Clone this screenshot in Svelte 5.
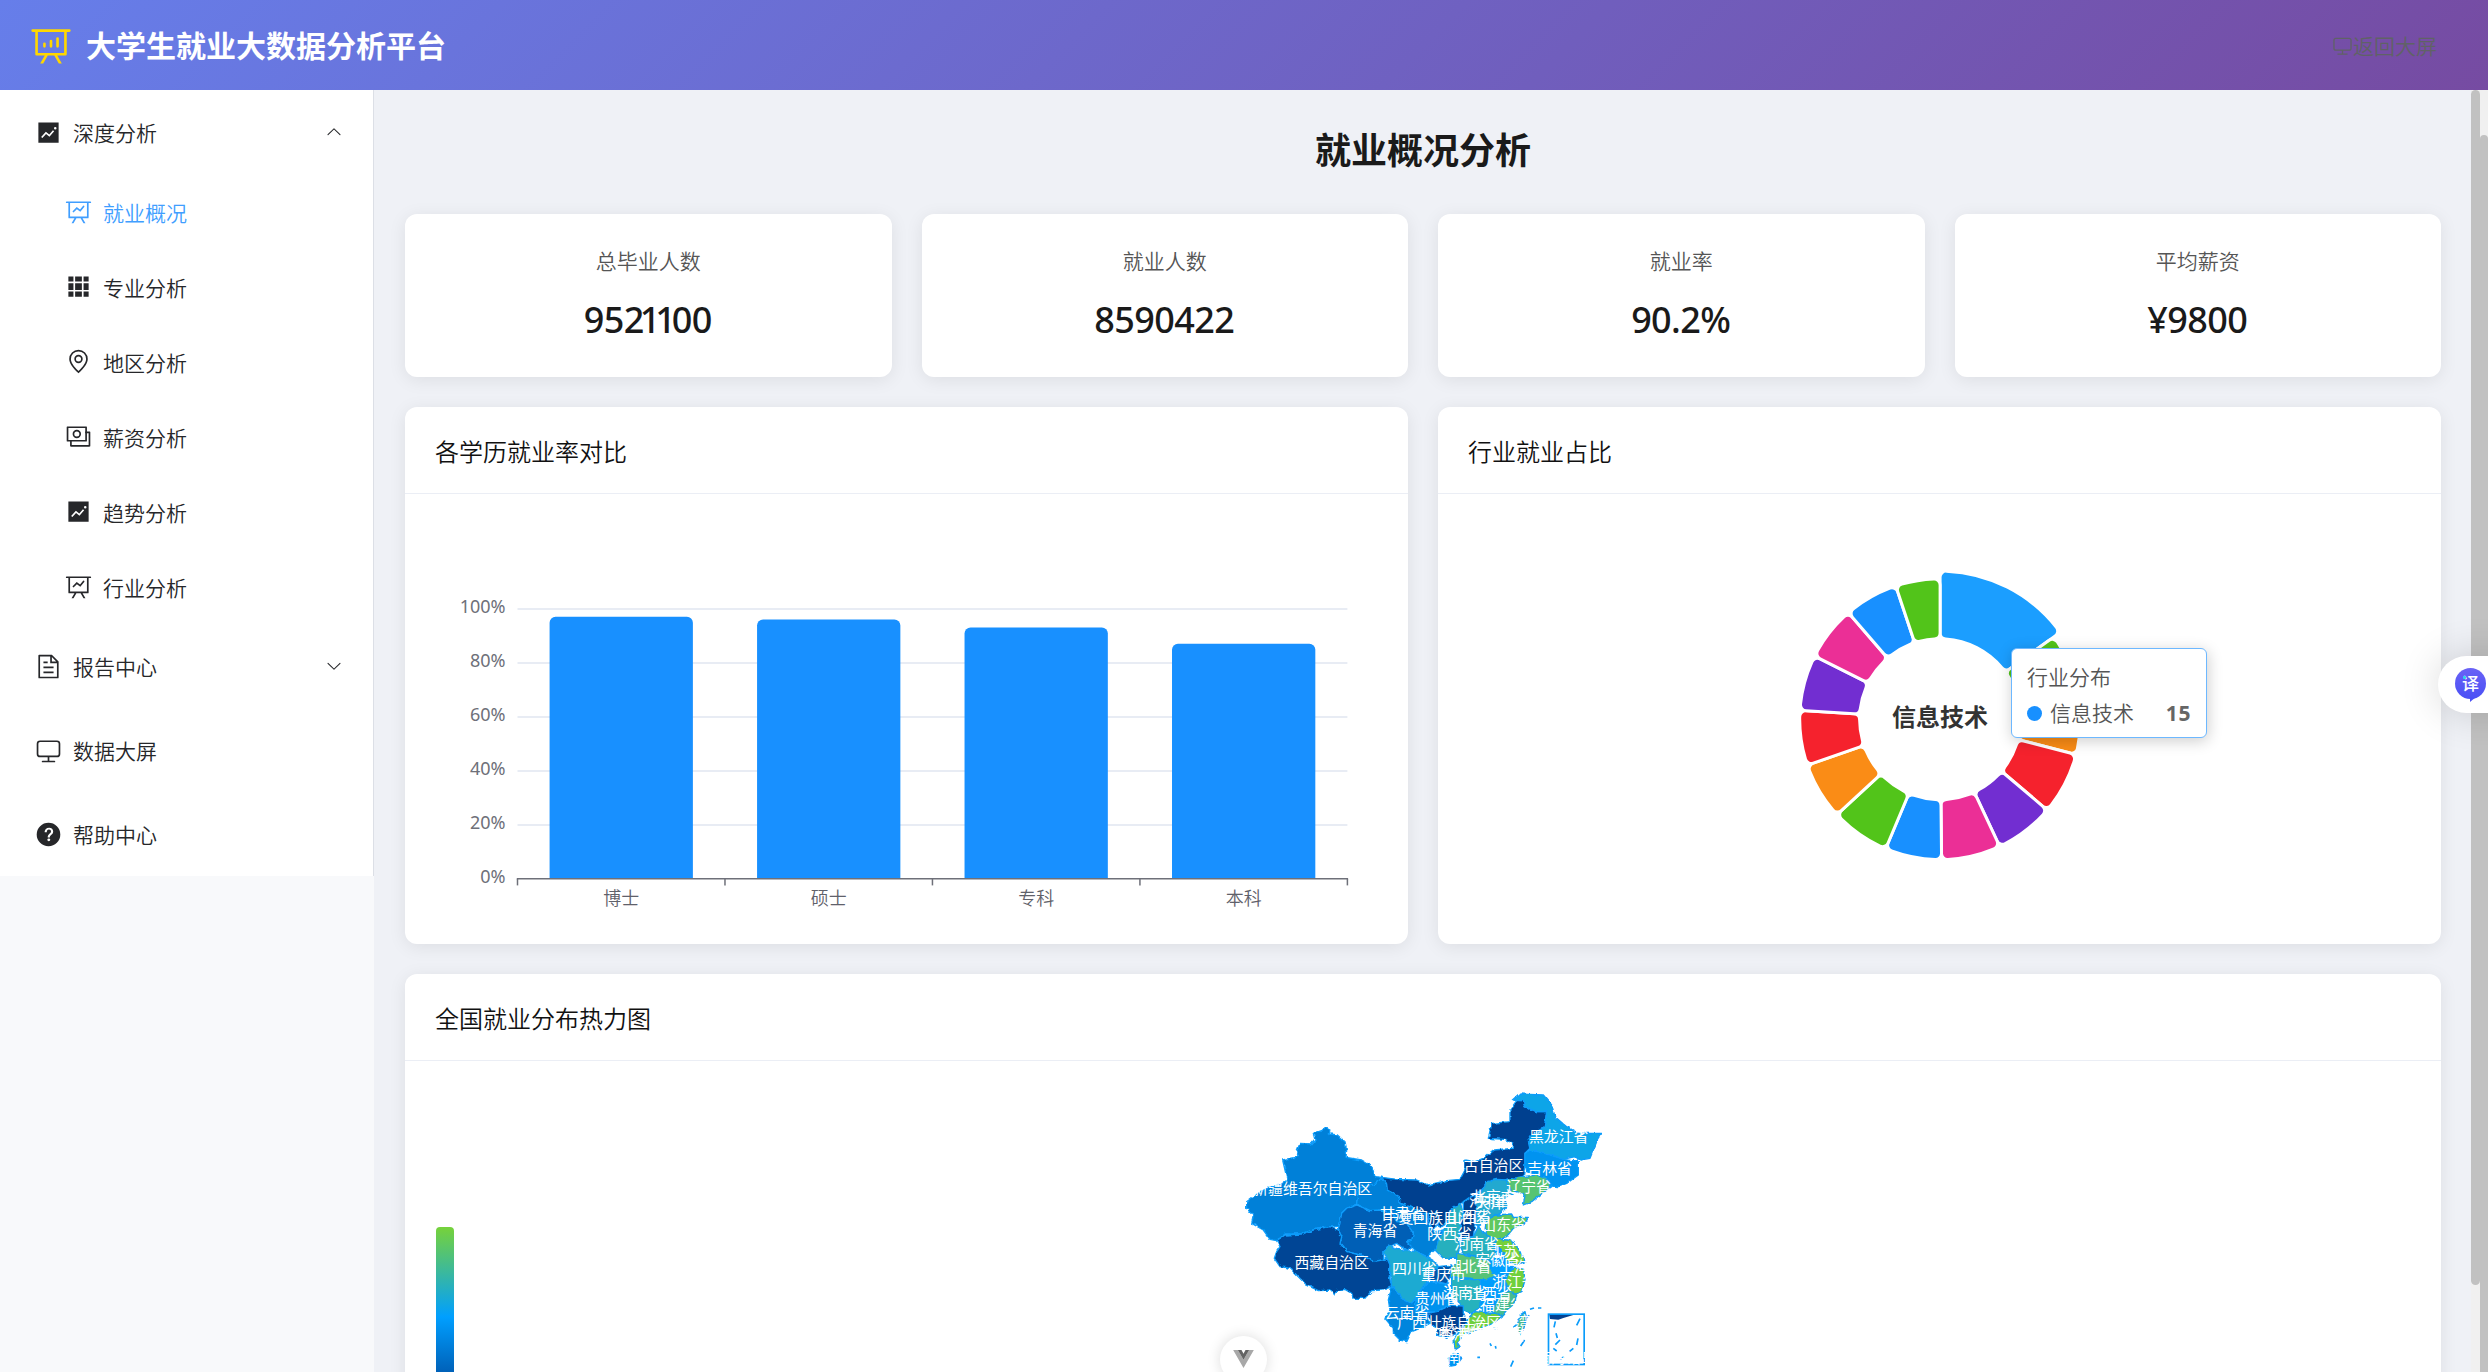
<script>
  const icons = {
    board: ['M359.168 768H160a32 32 0 0 1-32-32V192H64a32 32 0 0 1 0-64h896a32 32 0 1 1 0 64h-64v544a32 32 0 0 1-32 32H665.216l110.848 192h-73.856L591.36 768H433.024L322.176 960H248.32zM832 192H192v512h640zM342.656 534.656a32 32 0 1 1-45.312-45.312L444.992 341.76l125.44 94.08L679.04 300.032a32 32 0 1 1 49.92 39.936L581.632 524.224 451.008 426.24 342.656 534.592z'],
    analysis: ['m665.216 768 110.848 192h-73.856L591.36 768H433.024L322.176 960H248.32l110.848-192H160a32 32 0 0 1-32-32V192H64a32 32 0 0 1 0-64h896a32 32 0 1 1 0 64h-64v544a32 32 0 0 1-32 32zM832 192H192v512h640zM352 448a32 32 0 0 1 32 32v64a32 32 0 0 1-64 0v-64a32 32 0 0 1 32-32m160-64a32 32 0 0 1 32 32v128a32 32 0 0 1-64 0V416a32 32 0 0 1 32-32m160-64a32 32 0 0 1 32 32v192a32 32 0 1 1-64 0V352a32 32 0 0 1 32-32'],
    trend: ['M128 896V128h768v768zm291.712-327.296 128 102.4 180.16-201.792-47.744-42.624-139.84 156.608-128-102.4-180.16 201.792 47.744 42.624 139.84-156.608zM816 352a48 48 0 1 0-96 0 48 48 0 0 0 96 0'],
    grid: ['M640 384v256H384V384zm64 0h192v256H704zm-64 512H384V704h256zm64 0V704h192v192zm-64-768v192H384V128zm64 0h192v192H704zM320 384v256H128V384zm0 512H128V704h192zm0-768v192H128V128z'],
    location: ['M800 416a288 288 0 1 0-576 0c0 118.144 94.528 272.128 288 456.576C705.472 688.128 800 534.144 800 416M512 960C277.312 746.688 160 565.312 160 416a352 352 0 0 1 704 0c0 149.312-117.312 330.688-352 544', 'M512 512a96 96 0 1 0 0-192 96 96 0 0 0 0 192m0 64a160 160 0 1 1 0-320 160 160 0 0 1 0 320'],
    money: ['M256 640v192h640V384H768v-64h150.976c14.272 0 19.456 1.472 24.64 4.288a29.056 29.056 0 0 1 12.16 12.096c2.752 5.184 4.224 10.368 4.224 24.64v493.952c0 14.272-1.472 19.456-4.288 24.64a29.056 29.056 0 0 1-12.096 12.16c-5.184 2.752-10.368 4.224-24.64 4.224H233.024c-14.272 0-19.456-1.472-24.64-4.288a29.056 29.056 0 0 1-12.16-12.096c-2.688-5.184-4.224-10.368-4.224-24.576V640z', 'M768 192H128v448h640zm64-22.976v493.952c0 14.272-1.472 19.456-4.288 24.64a29.056 29.056 0 0 1-12.096 12.16c-5.184 2.752-10.368 4.224-24.64 4.224H105.024c-14.272 0-19.456-1.472-24.64-4.288a29.056 29.056 0 0 1-12.16-12.096C65.536 682.432 64 677.248 64 663.04V169.024c0-14.272 1.472-19.456 4.288-24.64a29.056 29.056 0 0 1 12.096-12.16C85.568 129.536 90.752 128 104.96 128h685.952c14.272 0 19.456 1.472 24.64 4.288a29.056 29.056 0 0 1 12.16 12.096c2.752 5.184 4.224 10.368 4.224 24.64z', 'M448 576a160 160 0 1 1 0-320 160 160 0 0 1 0 320m0-64a96 96 0 1 0 0-192 96 96 0 0 0 0 192'],
    document: ['M832 384H576V128H192v768h640zm-26.496-64L640 154.496V320zM160 64h480l256 256v608a32 32 0 0 1-32 32H160a32 32 0 0 1-32-32V96a32 32 0 0 1 32-32m160 448h384v64H320zm0-192h160v64H320zm0 384h384v64H320z'],
    monitor: ['M544 768v128h192a32 32 0 1 1 0 64H288a32 32 0 1 1 0-64h192V768H192A128 128 0 0 1 64 640V256a128 128 0 0 1 128-128h640a128 128 0 0 1 128 128v384a128 128 0 0 1-128 128zM192 192a64 64 0 0 0-64 64v384a64 64 0 0 0 64 64h640a64 64 0 0 0 64-64V256a64 64 0 0 0-64-64z'],
    question: ['M512 64a448 448 0 1 1 0 896 448 448 0 0 1 0-896m23.744 191.488c-52.096 0-92.928 14.784-123.2 44.352-30.976 29.568-45.76 70.4-45.76 122.496h80.256c0-29.568 5.632-52.8 17.6-68.992 13.376-19.712 35.2-28.864 66.176-28.864 23.936 0 42.944 6.336 56.32 19.712 12.672 13.376 19.712 31.68 19.712 54.912 0 17.6-6.336 34.496-19.008 49.984l-8.448 9.856c-45.76 40.832-73.216 70.4-82.368 89.408-9.856 19.008-14.08 42.24-14.08 68.992v9.856h80.96v-9.856c0-16.896 3.52-31.68 10.56-45.76 6.336-12.672 15.488-24.64 28.16-35.2 33.792-29.568 54.208-48.576 60.544-55.616 16.896-22.528 26.048-51.392 26.048-86.592 0-42.944-14.08-76.736-42.24-101.376-28.16-25.344-65.472-37.312-111.232-37.312m-12.672 406.208a54.272 54.272 0 0 0-38.72 14.784 49.408 49.408 0 0 0-15.488 38.016c0 15.488 4.928 28.16 15.488 38.016A54.848 54.848 0 0 0 523.072 768c15.488 0 28.16-4.928 38.72-14.784a51.52 51.52 0 0 0 16.192-38.72 51.968 51.968 0 0 0-15.488-38.016 55.936 55.936 0 0 0-39.424-14.784'],
    arrow: ['M831.872 340.864 512 652.672 192.128 340.864a30.592 30.592 0 0 0-42.752 0 29.12 29.12 0 0 0 0 41.6L489.664 714.24a32 32 0 0 0 44.672 0l340.288-331.712a29.12 29.12 0 0 0 0-41.728 30.592 30.592 0 0 0-42.752 0z'],
  };

  const menu = [
    { label: '深度分析', icon: 'trend', arrow: 'up' },
    { label: '就业概况', icon: 'board', sub: true, active: true },
    { label: '专业分析', icon: 'grid', sub: true },
    { label: '地区分析', icon: 'location', sub: true },
    { label: '薪资分析', icon: 'money', sub: true },
    { label: '趋势分析', icon: 'trend', sub: true },
    { label: '行业分析', icon: 'board', sub: true },
    { label: '报告中心', icon: 'document', arrow: 'down' },
    { label: '数据大屏', icon: 'monitor' },
    { label: '帮助中心', icon: 'question' },
  ];

  const stats = [
    { label: '总毕业人数', value: '9521100' },
    { label: '就业人数', value: '8590422' },
    { label: '就业率', value: '90.2%' },
    { label: '平均薪资', value: '¥9800' },
  ];

  // Splits a figure so that runs of the digit 1 can be set tighter
  const runs = (v) => v.split(/(1+)/).filter(Boolean);

  // Bar chart geometry
  const bars = [
    { label: '博士', value: 97 },
    { label: '硕士', value: 96 },
    { label: '专科', value: 93 },
    { label: '本科', value: 87 },
  ];
  const x0 = 82.5, x1 = 912.4, yBase = 354.7, unit = 2.7;
  const step = (x1 - x0) / bars.length;
  const barW = 143.3;
  function barPath(i, v) {
    const l = x0 + step * (i + 0.5) - barW / 2, r = l + barW, t = yBase - v * unit, k = 6;
    return `M${l} ${yBase}V${t + k}A${k} ${k} 0 0 1 ${l + k} ${t}H${r - k}A${k} ${k} 0 0 1 ${r} ${t + k}V${yBase}Z`;
  }

  // Ring chart: slices with rounded corners
  const palette = ['#1890ff', '#52c41a', '#fa8c16', '#f5222d', '#722ed1', '#eb2f96'];
  const edges = [0, 54.1, 79.4, 104.6, 130.3, 154.9, 179.4, 202.8, 227.2, 250.9, 273.6, 296.7, 319.3, 341.6, 360];
  const pt = (r, a) => {
    const t = (a * Math.PI) / 180;
    return `${(r * Math.sin(t)).toFixed(2)} ${(-r * Math.cos(t)).toFixed(2)}`;
  };
  function slice(a, b, r, R, k = 6) {
    const deg = 180 / Math.PI;
    const dO = Math.asin(k / (R - k)) * deg, dI = Math.asin(k / (r + k)) * deg;
    const sO = (R - k) * Math.cos(dO / deg), sI = (r + k) * Math.cos(dI / deg);
    return `M${pt(sO, a)}A${k} ${k} 0 0 1 ${pt(R, a + dO)}A${R} ${R} 0 0 1 ${pt(R, b - dO)}A${k} ${k} 0 0 1 ${pt(sO, b)}L${pt(sI, b)}A${k} ${k} 0 0 1 ${pt(r, b - dI)}A${r} ${r} 0 0 0 ${pt(r, a + dI)}A${k} ${k} 0 0 1 ${pt(sI, a)}Z`;
  }
  const slices = edges.slice(0, -1).map((a, i) => ({
    d: slice(a, edges[i + 1], 80.5, i === 0 ? 148.2 : 140.4),
    color: i === 0 ? '#1b9eff' : palette[i % 6],
  }));

  const regions = [
    ['#0080d8', '158,240 205,230 200,215 210,190 245,192 255,180 250,160 275,152 285,143 300,150 298,162 322,165 345,185 350,210 348,232 395,240 425,258 435,290 455,292 440,312 385,325 380,372 350,385 335,400 345,420 330,440 300,440 250,450 215,462 165,462 140,482 120,478 100,450 65,430 70,408 50,385 50,365 70,350 85,340 120,320 150,315 172,300 165,270'],
    ['#0080d8', '385,325 440,312 455,292 470,312 472,330 508,350 510,370 555,385 575,400 600,400 590,430 615,455 640,450 625,490 615,510 590,530 560,515 540,500 530,485 545,480 550,460 530,430 500,425 485,400 455,390 420,392 380,372'],
    ['#055fb6', '335,400 350,385 380,375 420,392 455,390 485,400 500,425 530,430 550,460 545,480 530,485 545,500 530,512 500,490 475,500 462,515 460,545 430,545 400,528 350,515 330,490 335,470 325,450'],
    ['#044595', '140,482 165,465 215,462 250,450 300,440 325,450 335,470 330,490 350,515 400,528 430,545 455,540 475,535 480,555 478,590 485,620 460,630 425,632 405,655 370,655 365,640 345,628 320,632 315,645 300,630 265,632 230,615 205,590 180,565 150,560 133,535 140,515 150,500'],
    ['#04418f', '455,292 500,298 560,300 595,315 650,302 690,298 705,270 705,240 735,245 760,235 790,210 850,205 850,190 825,178 775,175 785,130 840,125 840,90 860,62 880,62 885,80 920,95 950,95 945,130 935,155 905,165 895,180 900,205 885,220 885,255 880,290 830,298 800,310 770,305 760,325 735,345 715,355 700,365 690,375 665,390 650,430 635,440 612,430 610,440 590,430 600,400 575,400 555,385 510,370 508,350 472,330 470,312'],
    ['#10a5e8', '850,60 870,42 940,45 965,75 975,110 1010,140 1045,160 1115,160 1100,185 1080,235 1050,240 1035,230 1000,238 960,225 930,220 900,210 895,180 905,165 945,140 950,95 920,95 885,80 880,62'],
    ['#0093f0', '885,220 900,210 960,225 1000,238 1045,245 1045,285 1010,310 985,320 965,318 950,300 920,285 890,275 885,255'],
    ['#56c472', '830,298 880,290 920,285 955,300 965,320 930,345 905,365 880,375 885,345 860,335 845,345 830,330'],
    ['#24a9d0', '760,325 770,305 800,298 830,300 845,340 825,355 830,380 815,398 800,405 770,420 745,440 735,430 740,395 735,370 745,345'],
    ['#28b0be', '690,370 700,400 690,440 685,480 690,500 680,535 640,535 615,510 625,480 650,440 655,410 665,385'],
    ['#04418f', '735,345 740,395 735,430 730,470 695,478 690,440 700,400 700,370 715,355'],
    ['#04418f', '600,430 606,402 622,398 626,430 610,450'],
    ['#28b0be', '690,500 695,478 730,470 745,440 770,465 800,478 790,500 800,520 780,545 740,530 700,520'],
    ['#60c85e', '770,420 800,405 845,402 850,412 895,412 885,430 850,445 830,470 800,478 770,465 765,445'],
    ['#74d03a', '800,478 835,480 855,490 870,515 885,545 860,555 830,540 815,510 795,495'],
    ['#009fff', '790,490 815,510 830,540 850,560 830,585 800,590 775,565 780,540 800,520'],
    ['#56c378', '680,520 740,530 780,545 780,570 800,585 770,600 720,598 660,592 665,565 680,550'],
    ['#1caad2', '462,515 475,495 500,505 530,512 560,515 590,530 615,545 625,560 600,585 590,610 580,620 560,645 545,672 520,660 505,640 485,620 480,555'],
    ['#0655a8', '625,560 665,555 660,592 650,612 620,605 600,600 600,585'],
    ['#28b2bd', '665,595 720,598 750,600 755,640 750,680 725,700 700,690 690,670 665,650'],
    ['#009cfb', '750,600 770,598 800,590 830,595 830,625 815,650 790,690 760,695 750,680 755,640'],
    ['#70d03c', '830,585 850,565 880,565 885,600 875,635 850,645 835,630 825,600'],
    ['#45bb90', '835,630 860,645 855,670 830,690 815,710 785,695 800,665 815,645'],
    ['#0092ee', '580,620 600,605 650,612 665,650 665,675 620,695 580,695 555,690 560,650'],
    ['#0085dd', '485,620 505,640 520,660 545,672 560,650 555,690 590,700 600,730 570,745 545,755 530,785 510,780 490,760 490,745 465,715 480,690 475,660 480,640'],
    ['#054292', '590,700 620,695 665,675 700,678 700,700 710,725 680,760 650,775 620,765 620,745 600,730'],
    ['#70d03c', '710,725 735,695 790,700 815,710 790,730 750,745 700,765 680,785 690,800 675,810 672,780 690,755'],
    ['#0093f0', '655,835 672,820 690,822 695,835 680,855 662,858'],
    ['#48bb90', '870,705 885,695 890,715 880,750 870,765 862,735'],
  ];

  const places = [
    ['新疆维吾尔自治区', 248, 327], ['西藏自治区', 305, 548], ['内蒙古自治区', 746, 258], ['青海省', 435, 452],
    ['甘肃省', 517, 402], ['宁夏回族自治区', 617, 414], ['黑龙江省', 986, 171], ['吉林省', 959, 266],
    ['辽宁省', 896, 321], ['北京市', 790, 350], ['河北省', 784, 363], ['天津市', 803, 367], ['山西省', 717, 409],
    ['陕西省', 659, 461], ['山东省', 821, 434], ['河南省', 740, 492], ['江苏省', 842, 512], ['安徽省', 803, 540],
    ['上海市', 875, 560], ['湖北省', 717, 560], ['重庆市', 640, 583], ['四川省', 553, 565], ['浙江省', 853, 605],
    ['湖南省', 706, 637], ['江西省', 779, 640], ['福建省', 817, 673], ['贵州省', 622, 657], ['云南省', 531, 699],
    ['广西壮族自治区', 657, 727], ['广东省', 757, 745], ['香港特别行政区', 782, 761], ['澳门特别行政区', 770, 763],
    ['海南省', 672, 831], ['台湾省', 878, 725], ['南海诸岛', 1008, 832],
  ];
  const seaMarks = 'M842 860L850 842M872 798L884 780M780 790l4 8M796 798l2 8M742 832h8M900 688l12-4M924 684h10M790 745h14M850 742l10-8M890 712l8-6';
  const insetMarks = 'M976 724l-4 18M978 760l4 14M990 780l-14 14M970 805l10 8M1050 716l-10 20M1044 775l-4 20M1030 805l-12 10M990 838l12-8';
</script>

{#snippet icon(name, cls)}
  <svg class={cls} viewBox="0 0 1024 1024" aria-hidden="true">
    {#each icons[name] as d}<path fill="currentColor" {d} />{/each}
  </svg>
{/snippet}

<div class="app">
  <header>
    <div class="brand">
      {@render icon('analysis', 'logo')}
      <h1>大学生就业大数据分析平台</h1>
    </div>
    <a class="back" href="#screen">{@render icon('monitor', 'back-icon')}<span>返回大屏</span></a>
  </header>

  <div class="body">
    <aside>
      <nav>
        {#each menu as item}
          <div class="item" class:sub={item.sub} class:active={item.active}>
            <span class="icon-box">{@render icon(item.icon, 'menu-icon')}</span>
            <span class="label">{item.label}</span>
            {#if item.arrow}{@render icon('arrow', item.arrow === 'up' ? 'chev up' : 'chev')}{/if}
          </div>
        {/each}
      </nav>
    </aside>

    <main>
      <h2>就业概况分析</h2>
      <section class="stats">
        {#each stats as s}
          <div class="card stat">
            <div class="stat-label">{s.label}</div>
            <div class="stat-value">{#each runs(s.value) as run}<span class:ones={run[0] === '1'}>{run}</span>{/each}</div>
          </div>
        {/each}
      </section>

      <section class="charts">
        <div class="card chart">
          <h3>各学历就业率对比</h3>
          <svg class="plot" viewBox="0 0 943 390">
            {#each [0, 20, 40, 60, 80, 100] as v}
              {#if v}<line class="gridline" x1={x0} x2={x1} y1={yBase - v * unit + 0.2} y2={yBase - v * unit + 0.2} />{/if}
              <text class="tick num" x="70.5" y={yBase - v * unit + 4.3} text-anchor="end">{v}%</text>
            {/each}
            {#each bars as b, i}
              <path d={barPath(i, b.value)} fill="#1890ff" />
              <text class="tick" x={x0 + step * (i + 0.5)} y="381" text-anchor="middle">{b.label}</text>
            {/each}
            <line class="axis" x1={x0 - 0.7} x2={x1 + 0.7} y1="354.8" y2="354.8" />
            {#each [0, 1, 2, 3, 4] as t}
              <line class="axis" x1={x0 + step * t} x2={x0 + step * t} y1="354.8" y2="361.4" />
            {/each}
          </svg>
        </div>

        <div class="card chart">
          <h3>行业就业占比</h3>
          <div class="ring">
            <svg class="plot" viewBox="0 0 943 390">
              <g transform="translate(472.1 195.2)" stroke="#fff" stroke-width="3">
                {#each slices as s}<path d={s.d} fill={s.color} />{/each}
              </g>
              <text class="ring-label" x="472" y="201.5" text-anchor="middle">信息技术</text>
            </svg>
            <div class="tooltip">
              <div class="tip-title">行业分布</div>
              <div class="tip-row"><i></i><span>信息技术</span><b>15</b></div>
            </div>
          </div>
        </div>
      </section>

      <section class="card map-card">
        <h3>全国就业分布热力图</h3>
        <div class="map-body">
          <div class="scale"></div>
          <svg class="map" viewBox="0 0 1200 876">
            <defs>
              <filter id="coast" x="-5%" y="-5%" width="110%" height="110%">
                <feTurbulence type="fractalNoise" baseFrequency="0.08" numOctaves="1" seed="4" result="n" />
                <feDisplacementMap in="SourceGraphic" in2="n" scale="12" xChannelSelector="R" yChannelSelector="G" />
              </filter>
            </defs>
            <g filter="url(#coast)" stroke="#0a9cfb" stroke-width="4" stroke-linejoin="round">
              {#each regions as [fill, points]}<polygon {fill} {points} />{/each}
            </g>
            <g stroke="#0a9cfb" fill="none" stroke-width="5">
              <path d={seaMarks} />
              <polygon points="958,705 1030,705 1000,714 985,719 960,717" fill="#04418f" stroke="none" />
              <rect x="955.5" y="702.5" width="107" height="151" />
              <path d={insetMarks} />
            </g>
            {#each places as [name, x, y]}<text class="place" {x} y={y + 16} text-anchor="middle">{name}</text>{/each}
          </svg>
        </div>
      </section>
    </main>

    <div class="track inner"><div class="thumb"></div></div>
    <div class="track outer"><div class="thumb"></div></div>
  </div>

  <div class="devtools">
    <svg viewBox="0 0 62 54"><path fill="#a8a8a8" d="M0 0H14L31 29 48 0H62L31 54z" /><path fill="#646464" d="M14 0H25L31 11 37 0H48L31 29z" /></svg>
  </div>
  <div class="translate"><span class="bubble">译</span></div>
</div>

<style>
  :global(body) { margin: 0; }
  .app {
    position: relative;
    display: flex;
    flex-direction: column;
    height: 100vh;
    overflow: hidden;
    font-family: 'Noto Sans', 'Noto Sans CJK SC', sans-serif;
    font-weight: 350;
    color: #26272a;
    background: #f8f9fb;
  }
  h1, h2, h3 { margin: 0; }
  header {
    flex: none;
    height: 90px;
    box-sizing: border-box;
    padding: 0 51px 0 30px;
    display: flex;
    align-items: center;
    justify-content: space-between;
    background: linear-gradient(135deg, #667eea 0%, #764ba2 100%);
  }
  .brand { display: flex; align-items: center; gap: 14px; color: #ffd700; }
  .logo { width: 42px; height: 42px; }
  h1 { padding-top: 2px; color: #fff; font-size: 30px; line-height: 42px; font-weight: 700; }
  .back { display: flex; align-items: center; color: #606266; font-size: 21px; line-height: 30px; text-decoration: none; }
  .back span { padding-top: 1px; }
  .back-icon { width: 21px; height: 21px; }
  .body { flex: 1; min-height: 0; display: flex; }
  aside { width: 374px; flex: none; }
  nav { box-sizing: border-box; background: #fff; border-right: 1px solid #dcdfe6; }
  .item { height: 84px; box-sizing: border-box; padding: 0 30px; display: flex; align-items: center; font-size: 21px; }
  .item.sub { height: 75px; padding-left: 60px; }
  .item.active { color: #409eff; }
  .icon-box { width: 36px; margin-right: 7px; display: flex; justify-content: center; }
  .menu-icon { width: 27px; height: 27px; }
  .label { flex: 1; padding-top: 2px; line-height: 30px; }
  .chev { width: 18px; height: 18px; }
  .up { transform: rotate(180deg); }
  main { flex: 1; min-width: 0; padding: 30px 30px 0 31px; background: #eff1f6; overflow: hidden; }
  h2 { height: 61px; line-height: 62px; margin-bottom: 33px; font-size: 36px; font-weight: 700; text-align: center; color: #1a1a1a; }
  .card { background: #fff; border-radius: 12px; box-shadow: 0 3px 18px rgba(0, 0, 0, 0.08); }
  .stats { display: grid; grid-template-columns: repeat(4, 1fr); gap: 30px; margin-bottom: 30px; }
  .stat { height: 163px; box-sizing: border-box; padding-top: 30px; text-align: center; }
  .stat-label { font-size: 21px; line-height: 34px; color: #555; }
  .stat-value { margin: 15px 1px 0 0; font-size: 36px; line-height: 54px; font-weight: 500; letter-spacing: -0.6px; color: #1a1a1a; }
  .ones { margin: 0 1px 0 -4px; letter-spacing: -5px; }
  .charts { display: grid; grid-template-columns: 1fr 1fr; gap: 30px; margin-bottom: 30px; }
  .chart { height: 537px; }
  h3 { height: 87px; box-sizing: border-box; padding: 0 30px; border-bottom: 1px solid #ebeef5; font-size: 24px; line-height: 89px; font-weight: 350; color: #111; }
  .plot { display: block; width: 943px; height: 390px; margin: 30px; }
  .gridline { stroke: #e0e6f1; stroke-width: 1.5; }
  .axis { stroke: #6e7079; stroke-width: 1.5; }
  .tick { font-size: 18px; fill: #5f616a; }
  .num { font-weight: 400; fill: #6e7079; }
  .ring { position: relative; display: flow-root; }
  .ring-label { font-size: 24px; font-weight: 700; fill: #333; }
  .tooltip {
    position: absolute;
    left: 573px;
    top: 154px;
    width: 196px;
    height: 90px;
    box-sizing: border-box;
    padding: 12px 15px;
    border: 1.5px solid #6db8ff;
    border-radius: 6px;
    background: #fff;
    color: #555;
    font-size: 21px;
    box-shadow: 1px 3px 15px rgba(0, 0, 0, 0.2);
  }
  .tip-title { line-height: 32px; }
  .tip-row { display: flex; align-items: center; line-height: 32px; margin-top: 4px; }
  .tip-row i { width: 15px; height: 15px; margin-right: 8px; border-radius: 50%; background: #1890ff; }
  .tip-row b { margin-left: auto; font-weight: 700; color: #666; letter-spacing: 0.6px; }
  .map-card { height: 700px; }
  .map-body { display: flex; }
  .scale { width: 18px; height: 180px; margin: 166px 0 0 31px; border-radius: 4px; background: linear-gradient(#76d23a, #009fff 50%, #003a8c); }
  .map { width: 400px; height: 292px; margin: 19px 0 0 776px; }
  .place { font-size: 44.7px; fill: #fff; font-weight: 400; }
  .track { flex: none; background: #f0f0f0; }
  .thumb { background: #c1c1c1; border-radius: 5px; }
  .inner { width: 9px; }
  .inner .thumb { height: 1195px; }
  .outer { width: 8px; padding-top: 45px; box-sizing: border-box; }
  .outer .thumb { height: 1400px; }
  .devtools {
    position: absolute;
    left: 1220px;
    top: 1336px;
    width: 47px;
    height: 47px;
    border-radius: 24px;
    background: #fff;
    box-shadow: 0 0 14px rgba(0, 0, 0, 0.14);
  }
  .devtools svg { display: block; width: 21px; height: 18px; margin: 14px auto 0; }
  .translate {
    position: absolute;
    left: 2438px;
    top: 656px;
    width: 80px;
    height: 57px;
    box-sizing: border-box;
    padding: 12px 0 0 17px;
    border-radius: 29px 0 0 29px;
    background: #fff;
    box-shadow: 0 0 40px rgba(0, 0, 0, 0.16);
  }
  .bubble {
    position: relative;
    display: block;
    width: 31px;
    height: 31px;
    border-radius: 50%;
    background: linear-gradient(#6a62f6, #4a50f5);
    color: #fff;
    font-size: 17px;
    line-height: 31px;
    font-weight: 500;
    text-align: center;
  }
  .bubble::before {
    content: '';
    position: absolute;
    left: 15px;
    bottom: -3px;
    border: solid transparent;
    border-width: 0 6px 5px 0;
    border-right-color: #4a50f5;
    transform: scaleX(-1);
  }
  .bubble::after {
    content: '';
    position: absolute;
    left: 8px;
    top: 8px;
    width: 3px;
    height: 3px;
    border-radius: 1px;
    background: #2fd5e8;
  }
</style>
